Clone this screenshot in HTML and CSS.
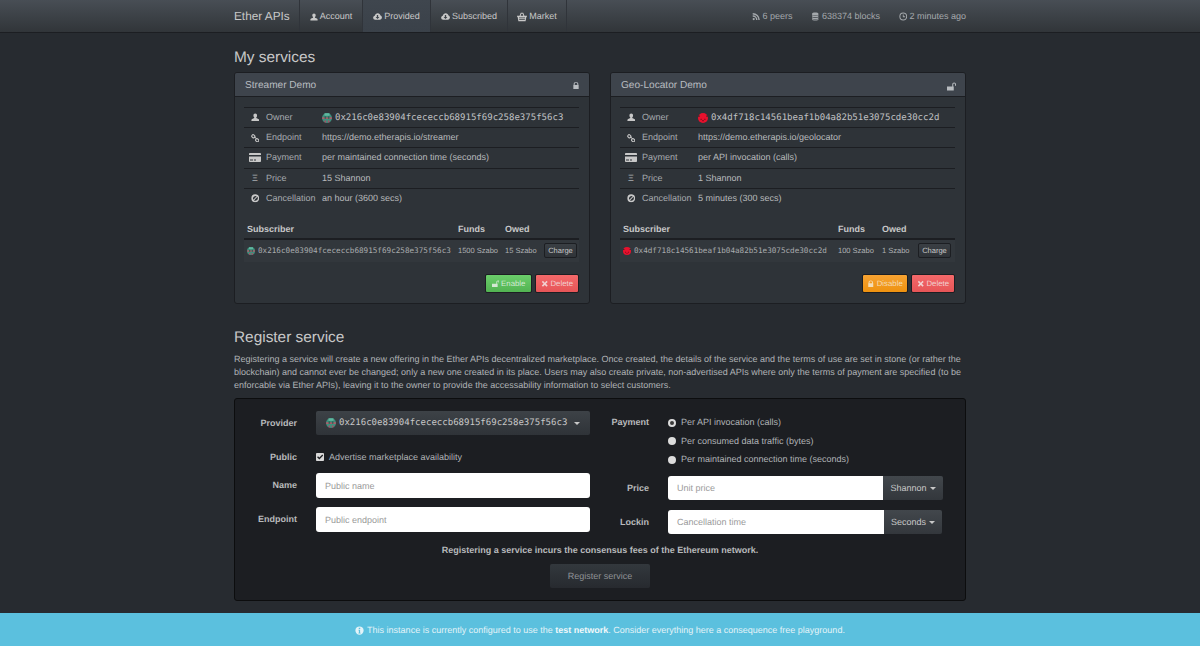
FILE: index.html
```html
<!DOCTYPE html>
<html lang="en">
<head>
<meta charset="utf-8">
<title>Ether APIs</title>
<link rel="stylesheet" href="styles.css">
</head>
<body>
<svg class="defs" width="0" height="0" aria-hidden="true">
  <symbol id="i-user" viewBox="0 0 12 12"><path d="M6 .6c1.600 0 2.600 1.200 2.600 2.900 0 1.100-.5 2.200-1.200 2.800v.9l3 1.200c.7.3 1 .8 1 1.500v1.500H.6v-1.500c0-.7.3-1.200 1-1.500l3-1.200v-.9C3.900 5.700 3.400 4.600 3.400 3.500 3.400 1.800 4.400.6 6 .6z"/></symbol>
  <symbol id="i-cloud" viewBox="0 0 12 12"><path fill-rule="evenodd" d="M3 10.200C1.400 10.200.2 9 .2 7.500c0-1.300.9-2.400 2.200-2.600C2.800 3 4.400 1.700 6.300 1.700c1.900 0 3.400 1.300 3.700 3.100 1.100.2 1.900 1.200 1.900 2.500 0 1.600-1.200 2.900-2.800 2.900zM5.100 4v2.600H3.400L6 9.200l2.600-2.600H6.900V4z"/></symbol>
  <symbol id="i-basket" viewBox="0 0 12 12"><path fill-rule="evenodd" d="M3.100 4.500 4.500 1h3l1.400 3.500H12v1.200h-.7L10.300 11H1.700L.7 5.700H0V4.500zm1.300 0h3.200L6.800 2.100H5.200zM2.400 6.600v.9h7.200v-.9zm.2 2v.9h6.800v-.9z"/></symbol>
  <symbol id="i-rss" viewBox="0 0 12 12"><circle cx="2.400" cy="9.600" r="1.600"/><path d="M1 4.300v2a4.700 4.700 0 0 1 4.700 4.700h2A6.700 6.700 0 0 0 1 4.300zM1 1v2a8 8 0 0 1 8 8h2A10 10 0 0 0 1 1z"/></symbol>
  <symbol id="i-db" viewBox="0 0 12 12"><path d="M1.500 2C1.500 1 3.500.4 6 .4s4.500.6 4.500 1.600v1c0 1-2 1.600-4.500 1.600S1.500 4 1.500 3zM1.500 4.200C2.300 5 4 5.300 6 5.300s3.700-.3 4.500-1.100v1.500c0 1-2 1.500-4.500 1.500s-4.500-.5-4.500-1.500zM1.500 7C2.300 7.700 4 8 6 8s3.700-.3 4.500-1v1.500C10.500 9.500 8.500 10 6 10s-4.500-.5-4.500-1.500zM1.500 9.700c.8.7 2.500 1 4.500 1s3.700-.3 4.500-1v.6c0 1-2 1.500-4.500 1.500s-4.500-.5-4.500-1.500z"/></symbol>
  <symbol id="i-clock" viewBox="0 0 12 12"><path fill-rule="evenodd" d="M6 .5a5.500 5.500 0 1 1 0 11 5.500 5.500 0 0 1 0-11zm0 1.400a4.100 4.100 0 1 0 0 8.200 4.100 4.100 0 0 0 0-8.200zM5.400 3h1.200v2.800h2v1.200H5.400z"/></symbol>
  <symbol id="i-lock" viewBox="0 0 12 12"><path fill-rule="evenodd" d="M2.500 5.200V3.900C2.500 1.900 4 .6 6 .6s3.500 1.300 3.500 3.300v1.300h.5v6.200H2V5.200zm1.500 0h4V3.900C8 2.700 7.200 2 6 2s-2 .7-2 1.900z"/></symbol>
  <symbol id="i-unlock" viewBox="0 0 12 12"><path fill-rule="evenodd" d="M0 6h7V3.300C7 1.800 8.100.6 9.500.6S12 1.800 12 3.300V5h-1.300V3.300c0-.8-.5-1.400-1.200-1.400s-1.200.6-1.200 1.400V6h.7v5.400H0z"/></symbol>
  <symbol id="i-link" viewBox="0 0 12 12"><g fill="none" stroke="currentColor" stroke-width="1.500"><rect x="1" y="1.300" width="4.600" height="3.800" rx="1.900" transform="rotate(40 3.300 3.200)"/><rect x="6.400" y="6.900" width="4.600" height="3.800" rx="1.900" transform="rotate(40 8.700 8.800)"/></g><path d="M4.400 4 5.300 3.200 8 6.200 7.100 7z"/></symbol>
  <symbol id="i-card" viewBox="0 0 12 9"><path d="M.8 0h10.400c.4 0 .8.300.8.800V2H0V.8C0 .3.400 0 .8 0zM0 3.600h12v4.600c0 .4-.4.800-.8.800H.8C.4 9 0 8.600 0 8.200zm1 2.900v.9h3v-.9zm4 0v.9h2v-.9z"/></symbol>
  <symbol id="i-ban" viewBox="0 0 12 12"><path fill-rule="evenodd" d="M6 .5a5.500 5.500 0 1 1 0 11 5.500 5.500 0 0 1 0-11zM3.200 8.100 8.100 3.200A3.700 3.700 0 0 0 3.200 8.100zm1 .9a3.700 3.700 0 0 0 5-5z"/></symbol>
  <symbol id="i-x" viewBox="0 0 12 12"><path d="M3.100 1.300 6 4.200l2.900-2.900 1.800 1.800L7.800 6l2.900 2.900-1.800 1.800L6 7.800l-2.900 2.900-1.800-1.800L4.200 6 1.300 3.100z"/></symbol>
  <symbol id="i-info" viewBox="0 0 12 12"><path fill-rule="evenodd" d="M6 .5a5.500 5.500 0 1 1 0 11 5.500 5.500 0 0 1 0-11zM5 2.400v1.700h2V2.400zM4.600 5v1h.6v3h-.6v1h2.800V9h-.6V5z"/></symbol>
  <symbol id="i-check" viewBox="0 0 10 10"><path fill-rule="evenodd" d="M1.300 0h7.400C9.400 0 10 .6 10 1.300v7.400c0 .7-.6 1.300-1.300 1.300H1.300C.6 10 0 9.400 0 8.700V1.300C0 .6.600 0 1.300 0zm6.600 1.900L4.200 5.700 2.500 4.100 1.400 5.200l2.800 2.900 4.800-5z"/></symbol>
  <symbol id="a-green" viewBox="0 0 12 12"><circle cx="6" cy="6" r="6" fill="#3f8f7d"/><path d="M.3 5h11.400v2.200H.3z" fill="#b05a6a"/><path d="M3 .4h6v3H3z" fill="#5fb79f"/><path d="M3 4h2v3H3zM7 4h2v3H7z" fill="#2d6658"/><path d="M3 9h2v2.500H3zM7 9h2v2.500H7z" fill="#a84c65"/></symbol>
  <symbol id="a-red" viewBox="0 0 12 12"><circle cx="6" cy="6" r="6" fill="#e8112d"/><path d="M3 7h1.500v1.500H3zM7.500 7H9v1.500H7.500zM5 8.500h2V10H5z" fill="#8c0a1e"/><path d="M.3 3h1.700v1.500H.3zM10 3h1.700v1.500H10z" fill="#30262a"/></symbol>
</svg>

<nav class="navbar">
  <div class="nav-inner">
    <a class="brand">Ether APIs</a>
    <ul class="nav-list">
      <li class="nav-item nav-account"><svg class="ico"><use href="#i-user"/></svg>Account</li>
      <li class="nav-item nav-provided active"><svg class="ico"><use href="#i-cloud"/></svg>Provided</li>
      <li class="nav-item nav-subscribed"><svg class="ico"><use href="#i-cloud"/></svg>Subscribed</li>
      <li class="nav-item nav-market"><svg class="ico"><use href="#i-basket"/></svg>Market</li>
    </ul>
    <ul class="nav-stats">
      <li><svg class="ico"><use href="#i-rss"/></svg>6 peers</li>
      <li><svg class="ico"><use href="#i-db"/></svg>638374 blocks</li>
      <li><svg class="ico"><use href="#i-clock"/></svg>2 minutes ago</li>
    </ul>
  </div>
</nav>

<main class="container">
  <h3 class="title">My services</h3>
  <div class="services">
    <section class="panel panel-a">
      <header class="panel-head"><span>Streamer Demo</span><svg class="ico lock"><use href="#i-lock"/></svg></header>
      <div class="panel-body">
        <div class="info">
          <div class="info-row"><span class="i-cell"><svg class="ico"><use href="#i-user"/></svg></span><span class="i-label">Owner</span><span class="i-val mono"><svg class="avatar"><use href="#a-green"/></svg>0x216c0e83904fcececcb68915f69c258e375f56c3</span></div>
          <div class="info-row"><span class="i-cell"><svg class="ico"><use href="#i-link"/></svg></span><span class="i-label">Endpoint</span><span class="i-val">https://demo.etherapis.io/streamer</span></div>
          <div class="info-row"><span class="i-cell"><svg class="ico card"><use href="#i-card"/></svg></span><span class="i-label">Payment</span><span class="i-val">per maintained connection time (seconds)</span></div>
          <div class="info-row"><span class="i-cell xi">Ξ</span><span class="i-label">Price</span><span class="i-val">15 Shannon</span></div>
          <div class="info-row"><span class="i-cell"><svg class="ico"><use href="#i-ban"/></svg></span><span class="i-label">Cancellation</span><span class="i-val">an hour (3600 secs)</span></div>
        </div>
        <div class="subs subs-a">
          <div class="sub-head"><span>Subscriber</span><span>Funds</span><span>Owed</span><span></span></div>
          <div class="sub-row"><span class="mono-sm"><svg class="avatar-sm"><use href="#a-green"/></svg>0x216c0e83904fcececcb68915f69c258e375f56c3</span><span>1500 Szabo</span><span>15 Szabo</span><button class="charge">Charge</button></div>
        </div>
        <div class="actions">
          <button class="btn btn-green"><svg class="ico"><use href="#i-unlock"/></svg>Enable</button>
          <button class="btn btn-red"><svg class="ico"><use href="#i-x"/></svg>Delete</button>
        </div>
      </div>
    </section>

    <section class="panel panel-b">
      <header class="panel-head"><span>Geo-Locator Demo</span><svg class="ico unlock"><use href="#i-unlock"/></svg></header>
      <div class="panel-body">
        <div class="info">
          <div class="info-row"><span class="i-cell"><svg class="ico"><use href="#i-user"/></svg></span><span class="i-label">Owner</span><span class="i-val mono"><svg class="avatar"><use href="#a-red"/></svg>0x4df718c14561beaf1b04a82b51e3075cde30cc2d</span></div>
          <div class="info-row"><span class="i-cell"><svg class="ico"><use href="#i-link"/></svg></span><span class="i-label">Endpoint</span><span class="i-val">https://demo.etherapis.io/geolocator</span></div>
          <div class="info-row"><span class="i-cell"><svg class="ico card"><use href="#i-card"/></svg></span><span class="i-label">Payment</span><span class="i-val">per API invocation (calls)</span></div>
          <div class="info-row"><span class="i-cell xi">Ξ</span><span class="i-label">Price</span><span class="i-val">1 Shannon</span></div>
          <div class="info-row"><span class="i-cell"><svg class="ico"><use href="#i-ban"/></svg></span><span class="i-label">Cancellation</span><span class="i-val">5 minutes (300 secs)</span></div>
        </div>
        <div class="subs subs-b">
          <div class="sub-head"><span>Subscriber</span><span>Funds</span><span>Owed</span><span></span></div>
          <div class="sub-row"><span class="mono-sm"><svg class="avatar-sm"><use href="#a-red"/></svg>0x4df718c14561beaf1b04a82b51e3075cde30cc2d</span><span>100 Szabo</span><span>1 Szabo</span><button class="charge">Charge</button></div>
        </div>
        <div class="actions">
          <button class="btn btn-orange"><svg class="ico"><use href="#i-lock"/></svg>Disable</button>
          <button class="btn btn-red"><svg class="ico"><use href="#i-x"/></svg>Delete</button>
        </div>
      </div>
    </section>
  </div>

  <h3 class="title title-reg">Register service</h3>
  <p class="intro">Registering a service will create a new offering in the Ether APIs decentralized marketplace. Once created, the details of the service and the terms of use are set in stone (or rather the blockchain) and cannot ever be changed; only a new one created in its place. Users may also create private, non-advertised APIs where only the terms of payment are specified (to be enforcable via Ether APIs), leaving it to the owner to provide the accessability information to select customers.</p>

  <section class="well">
    <div class="form-cols">
      <div class="col-left">
        <div class="f-row f-provider">
          <label class="f-label">Provider</label>
          <div class="select"><svg class="avatar-sel"><use href="#a-green"/></svg><span class="sel-text">0x216c0e83904fcececcb68915f69c258e375f56c3</span><span class="caret"></span></div>
        </div>
        <div class="f-row f-public">
          <label class="f-label">Public</label>
          <div class="check"><svg class="ico chk"><use href="#i-check"/></svg>Advertise marketplace availability</div>
        </div>
        <div class="f-row f-name">
          <label class="f-label">Name</label>
          <input class="input" type="text" placeholder="Public name">
        </div>
        <div class="f-row f-endpoint">
          <label class="f-label">Endpoint</label>
          <input class="input" type="text" placeholder="Public endpoint">
        </div>
      </div>
      <div class="col-right">
        <div class="r-row r-pay">
          <label class="f-label r-label">Payment</label>
          <div class="radios">
            <div class="radio"><span class="dot on"></span>Per API invocation (calls)</div>
            <div class="radio"><span class="dot"></span>Per consumed data traffic (bytes)</div>
            <div class="radio"><span class="dot"></span>Per maintained connection time (seconds)</div>
          </div>
        </div>
        <div class="r-row r-price">
          <label class="f-label r-label">Price</label>
          <div class="group"><input class="input group-input" type="text" placeholder="Unit price"><span class="addon addon-a">Shannon<span class="caret"></span></span></div>
        </div>
        <div class="r-row r-lock">
          <label class="f-label r-label">Lockin</label>
          <div class="group"><input class="input group-input" type="text" placeholder="Cancellation time"><span class="addon addon-b">Seconds<span class="caret"></span></span></div>
        </div>
      </div>
    </div>
    <p class="notice">Registering a service incurs the consensus fees of the Ethereum network.</p>
    <div class="submit-row"><button class="submit">Register service</button></div>
  </section>
</main>

<footer class="banner"><svg class="ico"><use href="#i-info"/></svg>This instance is currently configured to use the&nbsp;<b>test network</b>. Consider everything here a consequence free playground.</footer>
</body>
</html>
```

FILE: styles.css
```css
* { box-sizing: border-box; }
html, body { margin: 0; height: 100%; overflow: hidden; }
body {
  background: #272b30;
  color: #c8c8c8;
  font: 9px/13px "Liberation Sans", Arial, sans-serif;
  text-rendering: geometricPrecision;
}
button, input { text-rendering: geometricPrecision; }
.defs { position: absolute; }
.ico { width: 9px; height: 9px; fill: currentColor; flex: none; }
ul { list-style: none; margin: 0; padding: 0; }

/* navbar */
.navbar {
  height: 33px;
  background: linear-gradient(#484e55, #3a3f44 60%, #313539);
  border-bottom: 1px solid #1c1e22;
}
.nav-inner { width: 732px; margin: 0 auto; display: flex; height: 32px; align-items: stretch; }
.brand { width: 65px; font-size: 11.8px; line-height: 33px; color: #c8c8c8; }
.nav-list { display: flex; }
.nav-item {
  display: flex; align-items: center; justify-content: center; gap: 2px;
  border-left: 1px solid #30343a;
  padding-top: 1px;
  color: #c8c8c8;
}
.nav-item .ico { width: 9px; height: 9px; }
.nav-account { width: 63px; }
.nav-account .ico { width: 8px; height: 8px; }
.nav-provided { width: 68px; }
.nav-subscribed { width: 77px; }
.nav-market { width: 60px; border-right: 1px solid #30343a; }
.nav-market .ico { width: 10px; height: 10px; }
.active { background: linear-gradient(#3f464e, #3a4149); }
.nav-stats { display: flex; margin-left: auto; gap: 19px; align-items: center; padding-top: 1px; color: #a4a8ac; }
.nav-stats li { display: flex; align-items: center; gap: 2px; }
.nav-stats .ico { width: 8.500px; height: 9px; }

/* main */
.container { width: 732px; margin: 0 auto; }
.title { margin: 0; padding-top: 16px; height: 39px; font-size: 15.4px; line-height: 18px; font-weight: 400; color: #c8c8c8; }
.services { display: flex; justify-content: space-between; }
.panel {
  width: 356px;
  height: 232px;
  background: #2e3338;
  border: 1px solid #1c1e22;
  border-radius: 3px;
  overflow: hidden;
}
.panel-head {
  height: 24px;
  background: #3e444c;
  border-bottom: 1px solid #1c1e22;
  padding: 1px 9px 0 10px;
  display: flex; align-items: center; justify-content: space-between;
  font-size: 10.100px;
  color: #b8bcc0;
}
.panel-head .lock { width: 8px; height: 9px; }
.panel-head .unlock { width: 9px; height: 9px; margin-top: 2px; }
.panel-body { padding: 10px 10px 0 9px; }
.info-row {
  display: flex; align-items: center; height: 20.200px;
  border-top: 1px solid #1c1e22;
  color: #c8c8c8;
}
.i-cell { width: 22px; display: flex; justify-content: center; font-size: 9px; }
.i-cell .ico { width: 8.500px; height: 8.500px; }
.i-cell .card { width: 12px; height: 9px; }
.xi { color: #a9adb1; }
.i-label { width: 56px; color: #a6aaae; }
.i-val { display: flex; align-items: center; color: #b8babc; }
.mono { font: 9.040px/13px "DejaVu Sans Mono", "Liberation Mono", monospace; color: #c0c2c4; padding-top: 2px; }
.avatar { width: 10px; height: 10px; margin: -2px 3px 0 0; }

.subs { margin-top: 11px; }
.sub-head {
  display: grid; height: 21px; align-items: center;
  font-weight: 700; padding: 3px 3px 0;
  border-bottom: 2px solid #1c1e22;
  color: #c8c8c8;
}
.sub-row {
  display: grid; height: 22px; align-items: center;
  background: #32373c;
  padding: 0 3px;
  font-size: 7.500px;
  color: #b0b2b4;
}
.subs-a .sub-head, .subs-a .sub-row { grid-template-columns: 211px 47px 39px 1fr; }
.subs-b .sub-head, .subs-b .sub-row { grid-template-columns: 215px 44px 36px 1fr; }
.mono-sm { display: flex; align-items: center; font: 7.640px/13px "DejaVu Sans Mono", "Liberation Mono", monospace; color: #a8aaac; }
.avatar-sm { width: 8px; height: 8px; margin-right: 3px; }
.charge {
  width: 33px; height: 15px; padding: 0;
  background: linear-gradient(#3a3f44, #2f3338);
  border: 1px solid #1c1e22; border-radius: 2px;
  font: 7.500px "Liberation Sans", Arial, sans-serif;
  color: #c8c8c8;
}
.actions { display: flex; justify-content: flex-end; gap: 3px; margin-top: 12px; }
.btn {
  height: 19px; padding: 0; display: flex; align-items: center; justify-content: center; gap: 2px;
  border: 1px solid #1c1e22; border-radius: 2px;
  font: 7.800px "Liberation Sans", Arial, sans-serif;
  color: #d4e8d4;
}
.btn .ico { width: 7.500px; height: 7.500px; }
.btn-green { width: 47px; background: linear-gradient(#6bce6b, #52b352); }
.btn-red { width: 44px; background: linear-gradient(#f4696a, #e65557); color: #f1d0d0; }
.btn-orange { width: 46px; background: linear-gradient(#f7a332, #ee9210); color: #f3dcb5; }

.title-reg { padding-top: 25px; box-sizing: content-box; height: 18px; }
.intro { margin: 6px 0 0; color: #b0b3b6; line-height: 13px; }

/* form */
.well {
  margin-top: 6px;
  height: 203px;
  background: #1c1e22;
  border: 1px solid #0c0d0e;
  border-radius: 3px;
  padding-top: 12px;
}
.form-cols { display: flex; }
.col-left { width: 356px; }
.col-right { flex: 1; }
.f-row { display: flex; align-items: center; }
.f-label { width: 62px; text-align: right; font-weight: 700; color: #b8babc; flex: none; }
.f-provider { height: 24px; }
.f-public { height: 14px; margin-top: 15px; }
.f-name { height: 25px; margin-top: 9px; }
.f-endpoint { height: 25px; margin-top: 9px; }
.select {
  margin-left: 19px; width: 274px; height: 24px;
  background: linear-gradient(#3d4247, #2f3338);
  border-radius: 2px;
  display: flex; align-items: center; padding-left: 10px;
}
.avatar-sel { width: 10px; height: 10px; margin-right: 3px; flex: none; }
.sel-text { font: 9.040px/13px "DejaVu Sans Mono", "Liberation Mono", monospace; color: #c8c8c8; }
.caret {
  display: inline-block; width: 0; height: 0;
  border-left: 3px solid transparent; border-right: 3px solid transparent; border-top: 3px solid #c8c8c8;
}
.select .caret { margin-left: 7px; }
.check { margin-left: 19px; display: flex; align-items: center; gap: 5px; color: #b0b3b6; }
.chk { width: 8px; height: 8px; color: #d8d8d8; }
.input {
  margin-left: 19px; width: 274px; height: 100%;
  border: 0; border-radius: 3px; background: #fff; padding: 0 9px;
  font: 9px "Liberation Sans", Arial, sans-serif;
  color: #333;
}
.input::placeholder { color: #9a9a9a; opacity: 1; }

.r-label { width: 58px; }
.r-row { display: flex; align-items: center; }
.r-pay { align-items: flex-start; }
.r-pay .r-label { padding-top: 5px; }
.radios { margin-left: 19px; display: flex; flex-direction: column; gap: 5.500px; padding-top: 5px; }
.radio { display: flex; align-items: center; gap: 5px; height: 13px; color: #b0b3b6; }
.dot { width: 8px; height: 8px; border-radius: 50%; background: #dcdcdc; flex: none; }
.dot.on { background: #3a3a3a; border: 2.500px solid #dcdcdc; }
.r-price { height: 24px; margin-top: 10px; }
.r-lock { height: 24px; margin-top: 10px; }
.group { margin-left: 19px; display: flex; height: 100%; }
.group-input { margin: 0; width: 215px; border-radius: 3px 0 0 3px; }
.r-lock .group-input { width: 216px; }
.addon {
  display: flex; align-items: center; justify-content: center; gap: 3px;
  background: linear-gradient(#42474c, #33373c);
  border-radius: 0 2px 2px 0;
  color: #c8c8c8;
}
.addon-a { width: 60px; }
.addon-b { width: 58px; }
.notice { margin: 10px 0 0; text-align: center; font-weight: 700; color: #b8babc; }
.submit-row { display: flex; justify-content: center; margin-top: 7px; }
.submit {
  width: 100px; height: 24px;
  background: linear-gradient(#33383d, #272a2f);
  border: 0; border-radius: 2px;
  font: 9px "Liberation Sans", Arial, sans-serif;
  color: #8f9296;
}

/* banner overlays the page bottom */
.banner {
  position: fixed; left: 0; right: 0; bottom: 0; height: 33px;
  padding-top: 1px;
  background: #5bc0de;
  display: flex; align-items: center; justify-content: center;
  color: #e3f3f8;
}
.banner .ico { width: 9px; height: 9px; margin-right: 3px; }
.banner b { color: #f2f8fa; }
```
